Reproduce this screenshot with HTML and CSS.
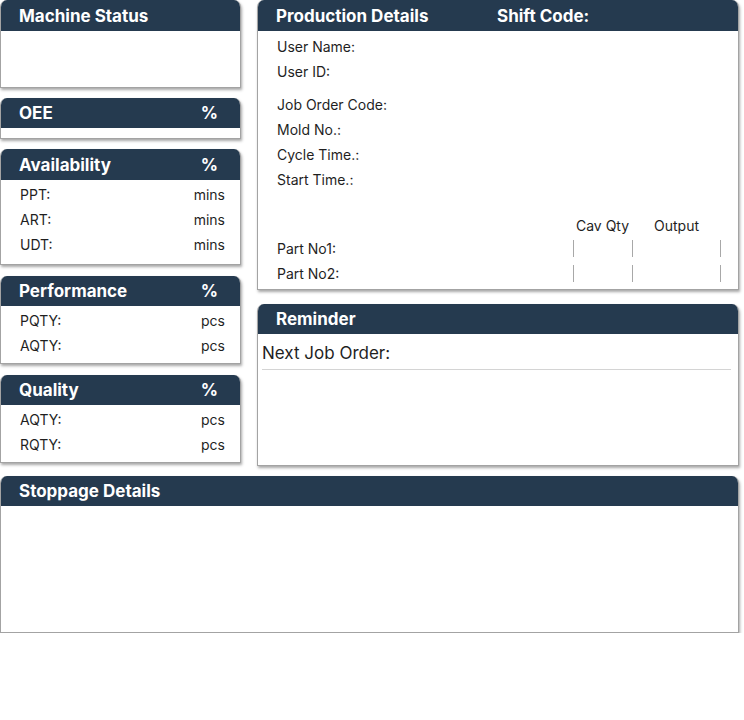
FILE: index.html
```html
<!DOCTYPE html>
<html>
<head>
<meta charset="utf-8">
<link rel="stylesheet" href="styles.css">
</head>
<body>
<div class="page">
  <div class="top">
    <div class="left">
      <section class="card machine">
        <header class="head"><span>Machine Status</span></header>
        <div class="body"></div>
      </section>
      <section class="card oee">
        <header class="head"><span>OEE</span><span>%</span></header>
        <div class="body"></div>
      </section>
      <section class="card metric avail">
        <header class="head"><span>Availability</span><span>%</span></header>
        <div class="body">
          <div class="row"><span>PPT:</span><span>mins</span></div>
          <div class="row"><span>ART:</span><span>mins</span></div>
          <div class="row"><span>UDT:</span><span>mins</span></div>
        </div>
      </section>
      <section class="card metric perf">
        <header class="head"><span>Performance</span><span>%</span></header>
        <div class="body">
          <div class="row"><span>PQTY:</span><span>pcs</span></div>
          <div class="row"><span>AQTY:</span><span>pcs</span></div>
        </div>
      </section>
      <section class="card metric qual">
        <header class="head"><span>Quality</span><span>%</span></header>
        <div class="body">
          <div class="row"><span>AQTY:</span><span>pcs</span></div>
          <div class="row"><span>RQTY:</span><span>pcs</span></div>
        </div>
      </section>
    </div>
    <div class="right">
      <section class="card prod">
        <header class="head"><span class="prod-title">Production Details</span><span>Shift Code:</span></header>
        <div class="body">
          <div class="group">
            <div class="line">User Name:</div>
            <div class="line">User ID:</div>
          </div>
          <div class="group second">
            <div class="line">Job Order Code:</div>
            <div class="line">Mold No.:</div>
            <div class="line">Cycle Time.:</div>
            <div class="line">Start Time.:</div>
          </div>
          <div class="parts">
            <span></span><span class="colh">Cav Qty</span><span class="colh">Output</span>
            <span class="plabel">Part No1:</span><span class="cell"></span><span class="cell last"></span>
            <span class="plabel">Part No2:</span><span class="cell"></span><span class="cell last"></span>
          </div>
        </div>
      </section>
      <section class="card reminder">
        <header class="head"><span>Reminder</span></header>
        <div class="body">
          <div class="next">Next Job Order:</div>
        </div>
      </section>
    </div>
  </div>
  <section class="card stoppage">
    <header class="head"><span>Stoppage Details</span></header>
    <div class="body"></div>
  </section>
</div>
</body>
</html>
```
FILE: styles.css
```css
* { box-sizing: border-box; }
html, body { margin: 0; padding: 0; background: #fff; }
body {
  font-family: Inter, "Liberation Sans", sans-serif;
  color: #1f1f1f;
  font-size: 14px;
}
.page { width: 739px; }
.top { display: flex; gap: 16px; align-items: flex-start; }
.left { width: 241px; display: flex; flex-direction: column; gap: 10px; }
.right { width: 482px; display: flex; flex-direction: column; gap: 14px; }

.card {
  background: #fff;
  border: 1px solid #a3a3a3;
  border-top: none;
  border-radius: 7px 7px 0 0;
  box-shadow: 1px 2px 3px rgba(0,0,0,0.35);
  overflow: hidden;
}
.head {
  background: #253a4f;
  color: #fff;
  font-weight: 700;
  font-size: 17px;
  height: 31px;
  display: flex;
  align-items: center;
  justify-content: space-between;
  padding: 0 23px 0 19px;
  margin: 0 -1px;
}
.machine .body { height: 56px; }
.oee .head { height: 30px; }
.oee .body { height: 10px; }
.metric .body { padding: 2px 15px 5px 19px; }
.avail .body { padding-bottom: 7px; }
.perf .head, .qual .head { height: 30px; }
.perf, .qual { margin-top: 1px; }
.row {
  display: flex;
  justify-content: space-between;
  align-items: center;
  height: 25px;
}

.prod .head { justify-content: flex-start; }
.prod-title { width: 221px; }
.prod .body { padding: 3px 17px 6px 19px; height: 258px; }
.line { height: 25px; display: flex; align-items: center; }
.group.second { margin-top: 8px; }
.parts {
  margin-top: 22px;
  display: grid;
  grid-template-columns: 1fr 59px 88px 1px;
  grid-template-rows: 22px 25px 25px;
  align-items: center;
}
.colh { text-align: center; }
.parts .colh:nth-child(3) { grid-column: 3 / span 2; }
.plabel { grid-column: 1; }
.cell {
  height: 17px;
  border-left: 1px solid #a8a8a8;
}
.cell.last { border-right: 1px solid #a8a8a8; grid-column: 3 / span 2; }

.reminder .head { height: 30px; }
.reminder .body { height: 131px; padding: 3px 7px 0 4px; }
.next {
  font-size: 17px;
  height: 33px;
  display: flex;
  align-items: center;
  border-bottom: 1px solid #d4d4d4;
}

.stoppage { margin-top: 10px; width: 739px; }
.stoppage .head { height: 30px; }
.stoppage .body { height: 126px; }
```
